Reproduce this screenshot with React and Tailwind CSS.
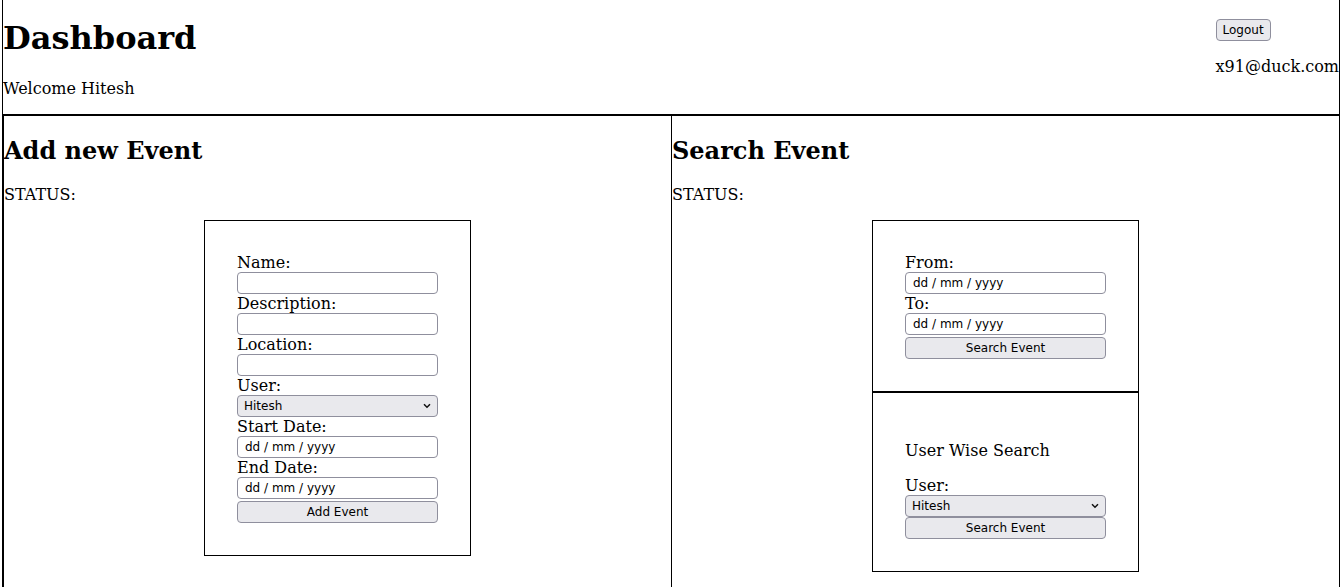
import React from "react";

const inputCls =
  "block h-[22px] w-[201px] rounded-[4px] border border-[#8f8f9d] bg-white px-[7px] font-['DejaVu_Sans',sans-serif] text-[12px] leading-[normal] text-black outline-none";
const btnCls =
  "block h-[22px] w-[201px] rounded-[4px] border border-[#8f8f9d] bg-[#e9e9ed] font-['DejaVu_Sans',sans-serif] text-[12px] leading-[normal] text-black";
const labelCls = "block h-[19px] text-[16px] leading-[19px]";

function Field({ label, children }) {
  return (
    <>
      <label className={labelCls}>{label}</label>
      {children}
    </>
  );
}

function TextInput() {
  return <input type="text" className={inputCls} />;
}

function DateInput() {
  return <input type="text" readOnly defaultValue="dd / mm / yyyy" className={inputCls} />;
}

function UserSelect() {
  return (
    <div className="relative h-[22px] w-[201px]">
      <select
        defaultValue="Hitesh"
        className="block h-[22px] w-[201px] appearance-none rounded-[4px] border border-[#8f8f9d] bg-[#e9e9ed] pl-[6px] font-['DejaVu_Sans',sans-serif] text-[12px] leading-[normal] text-black outline-none"
      >
        <option>Hitesh</option>
      </select>
      <svg
        className="pointer-events-none absolute right-[7px] top-[8px]"
        width="8"
        height="6"
        viewBox="0 0 8 6"
      >
        <polyline points="1,1.2 4,4.2 7,1.2" fill="none" stroke="#111" strokeWidth="1.5" />
      </svg>
    </div>
  );
}

function SectionHead({ title }) {
  return (
    <>
      <h2 className="mt-[21px] mb-[20px] text-[24px] font-bold leading-[28px]">{title}</h2>
      <p className="mb-[16px] text-[16px] leading-[19px]">STATUS:</p>
    </>
  );
}

export default function App() {
  return (
    <div className="min-h-[587px] bg-white font-['DejaVu_Serif',serif] text-black">
      <div className="ml-[2px] w-[1338px] border-x border-black">
        <header className="flex justify-between border-b border-black">
          <div>
            <h1 className="mt-[20px] text-[32px] font-bold leading-[37px]">Dashboard</h1>
            <p className="mt-[22px] mb-[16px] text-[16px] leading-[19px]">Welcome Hitesh</p>
          </div>
          <div className="flex flex-col items-start pt-[19px]">
            <button className="h-[22px] w-[55px] rounded-[4px] border border-[#8f8f9d] bg-[#e9e9ed] font-['DejaVu_Sans',sans-serif] text-[12px] leading-[normal] text-black">
              Logout
            </button>
            <p className="mt-[16px] text-[16px] leading-[19px]">x91@duck.com</p>
          </div>
        </header>

        <div className="flex">
          <section className="w-[669px] border-x border-t border-black pb-[40px]">
            <SectionHead title="Add new Event" />
            <div className="mx-auto w-[267px] border border-black p-[32px]">
              <Field label="Name:">
                <TextInput />
              </Field>
              <Field label="Description:">
                <TextInput />
              </Field>
              <Field label="Location:">
                <TextInput />
              </Field>
              <Field label="User:">
                <UserSelect />
              </Field>
              <Field label="Start Date:">
                <DateInput />
              </Field>
              <Field label="End Date:">
                <DateInput />
              </Field>
              <button className={btnCls + " mt-[2px]"}>Add Event</button>
            </div>
          </section>

          <section className="flex-1 border-t border-black pb-[40px]">
            <SectionHead title="Search Event" />
            <div className="mx-auto w-[267px]">
              <div className="border border-black p-[32px]">
                <Field label="From:">
                  <DateInput />
                </Field>
                <Field label="To:">
                  <DateInput />
                </Field>
                <button className={btnCls + " mt-[2px]"}>Search Event</button>
              </div>
              <div className="border border-black p-[32px]">
                <p className="my-[16px] text-[16px] leading-[19px]">User Wise Search</p>
                <Field label="User:">
                  <UserSelect />
                </Field>
                <button className={btnCls}>Search Event</button>
              </div>
            </div>
          </section>
        </div>
      </div>
    </div>
  );
}
